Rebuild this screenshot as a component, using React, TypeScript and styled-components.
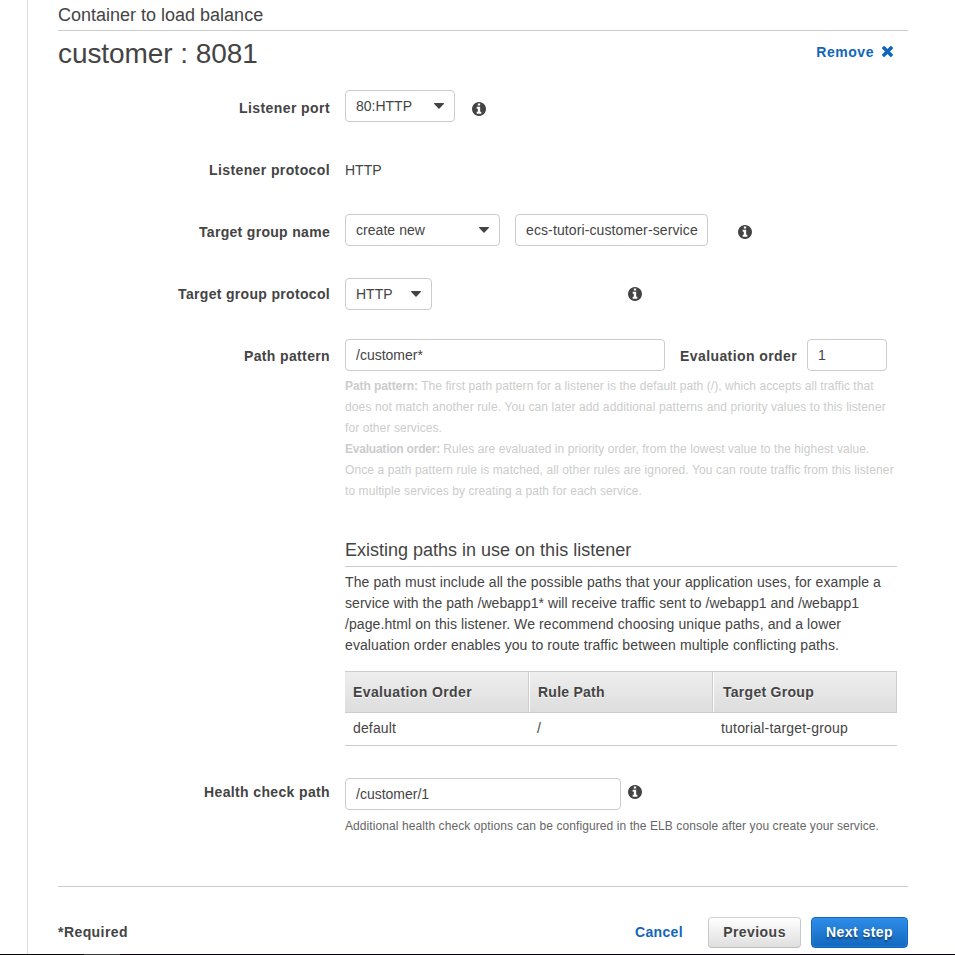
import React from "react";
import styled, { createGlobalStyle, css } from "styled-components";

const GlobalStyle = createGlobalStyle`
  *, *::before, *::after { box-sizing: border-box; }
  html, body { margin: 0; padding: 0; background: #fff; }
  body {
    font-family: "Liberation Sans", Arial, Helvetica, sans-serif;
    font-size: 14px;
    line-height: 21px;
    color: #444;
    overflow: hidden;
  }
`;

const Screen = styled.div`
  display: flex;
  flex-direction: column;
  width: 955px;
  height: 955px;
  overflow: hidden;
`;

const Main = styled.main`
  flex: 1;
  min-height: 0;
  margin-left: 27px;
  padding: 3px 46px 0 30px;
  border-left: 1px solid #ddd;
`;

const Taskbar = styled.div`
  flex: none;
  height: 1px;
  background: linear-gradient(90deg, #080808 84px, #3a3a3a 84px, #3a3a3a 120px, #080010 120px);
`;

const Text = styled.span<{ $ls?: number }>`
  letter-spacing: ${(p) => p.$ls ?? 0}px;
  white-space: nowrap;
`;

const Strong = styled.b<{ $ls: number }>`
  letter-spacing: ${(p) => p.$ls}px;
`;

const SectionTitle = styled.h3<{ $width: number; $gapBottom: number }>`
  width: ${(p) => p.$width}px;
  margin: 0;
  padding-bottom: ${(p) => p.$gapBottom}px;
  border-bottom: 1px solid #ccc;
  font-size: 18px;
  font-weight: 400;
  line-height: 25px;
`;

const ContainerBar = styled.div`
  display: flex;
  justify-content: space-between;
  align-items: flex-start;
  height: 59px;
  padding: 3px 15px 0 0;
  width: 850px;
`;

const ContainerName = styled.h2`
  margin: 0;
  font-size: 28px;
  font-weight: 400;
  line-height: 40px;
`;

const RemoveLink = styled.a`
  display: flex;
  align-items: flex-start;
  gap: 8px;
  margin-top: 8px;
  color: #16b;
  font-weight: 700;
  cursor: pointer;
`;

const FormRow = styled.div<{ $height?: number }>`
  display: grid;
  grid-template-columns: 272px 552px;
  column-gap: 15px;
  align-items: start;
  height: ${(p) => (p.$height ? `${p.$height}px` : "auto")};
`;

const Label = styled.label<{ $ls: number }>`
  padding-top: 8px;
  text-align: right;
  font-weight: 700;
  letter-spacing: ${(p) => p.$ls}px;
  white-space: nowrap;
`;

const Controls = styled.div<{ $top?: number }>`
  display: flex;
  align-items: flex-start;
  padding-top: ${(p) => p.$top ?? 0}px;
`;

const StaticValue = styled.div`
  padding-top: 8px;
`;

const fieldBox = css`
  height: 32px;
  border: 1px solid #ccc;
  border-radius: 4px;
  background: #fff;
  color: #444;
  font: 14px/22px "Liberation Sans", Arial, sans-serif;
`;

const SelectBox = styled.button<{ $width: number }>`
  ${fieldBox}
  display: flex;
  justify-content: space-between;
  align-items: center;
  width: ${(p) => p.$width}px;
  padding: 0 10px;
`;

const TextField = styled.input<{ $width: number; $ls?: number; $ml?: number }>`
  ${fieldBox}
  width: ${(p) => p.$width}px;
  margin-left: ${(p) => p.$ml ?? 0}px;
  padding: 0 0 0 10px;
  letter-spacing: ${(p) => p.$ls ?? 0}px;
  outline: none;
`;

const InlineLabel = styled(Label)`
  width: 127px;
  margin-left: 15px;
  padding-top: 7px;
  text-align: left;
`;

const InfoIcon = styled.svg<{ $left: number; $top: number }>`
  flex: none;
  width: 14px;
  height: 14px;
  margin: ${(p) => p.$top}px 0 0 ${(p) => p.$left}px;
  fill: #444;
`;

const HelpText = styled.div<{ $tone: "muted" | "dark" }>`
  display: flex;
  flex-direction: column;
  margin-top: ${(p) => (p.$tone === "muted" ? 5 : 6)}px;
  color: ${(p) => (p.$tone === "muted" ? "#ccc" : "#666")};
  font-size: 12px;
`;

const Line = styled.div<{ $ls: number }>`
  letter-spacing: ${(p) => p.$ls}px;
  white-space: pre;
`;

const ExistingPaths = styled.section`
  margin-top: 36px;
`;

const Paragraph = styled.div`
  margin: 5px 0 15px;
`;

const PathTable = styled.table`
  width: 552px;
  border-collapse: separate;
  border-spacing: 0;
  table-layout: fixed;
`;

const HeadCell = styled.th<{ $ls: number }>`
  height: 42px;
  padding: 0 8px;
  border: 0 solid #ccc;
  border-width: 1px 1px 1px 0;
  background: linear-gradient(#eee, #ddd);
  text-align: left;
  text-shadow: 0 1px 0 #fff;
  letter-spacing: ${(p) => p.$ls}px;
  & + & {
    padding-left: 9px;
    box-shadow: inset 1px 0 0 #fff;
  }
  &:last-child {
    padding-left: 10px;
  }
`;

const Cell = styled.td<{ $ls?: number }>`
  height: 33px;
  padding: 5px 8px 6px;
  border-bottom: 1px solid #ccc;
  letter-spacing: ${(p) => p.$ls ?? 0}px;
`;

const HealthRow = styled.div`
  margin-top: 28px;
`;

const Footer = styled.footer`
  display: flex;
  align-items: flex-start;
  width: 850px;
  margin-top: 49px;
  padding-top: 30px;
  border-top: 1px solid #ccc;
  font-weight: 700;
`;

const Required = styled.span`
  flex: 1;
  margin-top: 5px;
  letter-spacing: 0.43px;
`;

const CancelLink = styled.a`
  margin: 5px 25px 0 0;
  color: #16b;
  letter-spacing: 0.35px;
  cursor: pointer;
`;

const Button = styled.button<{ $primary?: boolean }>`
  height: 31px;
  width: ${(p) => (p.$primary ? 97 : 93)}px;
  margin-left: ${(p) => (p.$primary ? 10 : 0)}px;
  padding: 0;
  border-radius: 4px;
  font: 700 14px/21px "Liberation Sans", Arial, sans-serif;
  letter-spacing: 0.45px;
  white-space: nowrap;
  ${(p) =>
    p.$primary
      ? css`
          border: 1px solid #1166bb;
          background: linear-gradient(#2e8de8, #1268be);
          box-shadow: inset 0 0 2px #3f9af0;
          color: #fff;
          text-shadow: 0 2px 2px rgba(0, 0, 0, 0.45);
        `
      : css`
          border: 1px solid;
          border-color: #d2d2d2 #c8c8c8 #bdbdbd #c8c8c8;
          background: linear-gradient(#fff, #dfdfdf);
          color: #444;
          text-shadow: 0 1px 0 #fff;
        `}
`;

const CaretSvg = styled.svg`
  flex: none;
  width: 10px;
  height: 6px;
  fill: #444;
`;

const CrossSvg = styled.svg`
  width: 11px;
  height: 11px;
  margin-top: 4px;
  fill: #16b;
`;

const Caret = () => (
  <CaretSvg viewBox="0 0 10 6">
    <path d="M.6 0h8.8q.6 0 .6.6 0 .2-.2.4L5.5 5.5q-.5.5-1 0L.2 1Q0 .8 0 .6 0 0 .6 0z" />
  </CaretSvg>
);

const Info = ({ left, top }: { left: number; top: number }) => (
  <InfoIcon $left={left} $top={top} viewBox="128 128 1536 1536">
    <path d="M1152 1376v-160q0-14-9-23t-23-9h-96v-512q0-14-9-23t-23-9h-320q-14 0-23 9t-9 23v160q0 14 9 23t23 9h96v320h-96q-14 0-23 9t-9 23v160q0 14 9 23t23 9h448q14 0 23-9t9-23zm-128-896v-160q0-14-9-23t-23-9h-192q-14 0-23 9t-9 23v160q0 14 9 23t23 9h192q14 0 23-9t9-23zm640 416q0 209-103 385.5t-279.5 279.5-385.5 103-385.5-103-279.5-279.5-103-385.5 103-385.5 279.5-279.5 385.5-103 385.5 103 279.5 279.5 103 385.5z" />
  </InfoIcon>
);

const Cross = () => (
  <CrossSvg viewBox="110 366 1188 1188">
    <path d="M1298 1322q0 40-28 68l-136 136q-28 28-68 28t-68-28l-294-294-294 294q-28 28-68 28t-68-28l-136-136q-28-28-28-68t28-68l294-294-294-294q-28-28-28-68t28-68l136-136q28-28 68-28t68 28l294 294 294-294q28-28 68-28t68 28l136 136q28 28 28 68t-28 68l-294 294 294 294q28 28 28 68z" />
  </CrossSvg>
);

export default function App() {
  return (
    <>
      <GlobalStyle />
      <Screen>
        <Main>
          <SectionTitle $width={850} $gapBottom={2}>
            Container to load balance
          </SectionTitle>
          <ContainerBar>
            <ContainerName>
              <Text $ls={-0.07}>customer : 8081</Text>
            </ContainerName>
            <RemoveLink>
              <Text $ls={0.55}>Remove</Text>
              <Cross />
            </RemoveLink>
          </ContainerBar>

          <FormRow $height={62}>
            <Label $ls={0.42}>Listener port</Label>
            <Controls>
              <SelectBox $width={110}>
                <Text>80:HTTP</Text>
                <Caret />
              </SelectBox>
              <Info left={17} top={12} />
            </Controls>
          </FormRow>

          <FormRow $height={62}>
            <Label $ls={0.39}>Listener protocol</Label>
            <StaticValue>HTTP</StaticValue>
          </FormRow>

          <FormRow $height={62}>
            <Label $ls={0.31}>Target group name</Label>
            <Controls>
              <SelectBox $width={155}>
                <Text $ls={0.05}>create new</Text>
                <Caret />
              </SelectBox>
              <TextField $width={193} $ls={0.11} $ml={15} defaultValue="ecs-tutori-customer-service" />
              <Info left={30} top={11} />
            </Controls>
          </FormRow>

          <FormRow $height={62}>
            <Label $ls={0.32}>Target group protocol</Label>
            <Controls $top={2}>
              <SelectBox $width={87}>
                <Text>HTTP</Text>
                <Caret />
              </SelectBox>
              <Info left={196} top={9} />
            </Controls>
          </FormRow>

          <FormRow>
            <Label $ls={0.36}>Path pattern</Label>
            <div>
              <Controls $top={1}>
                <TextField $width={320} defaultValue="/customer*" />
                <InlineLabel $ls={0.41}>Evaluation order</InlineLabel>
                <TextField $width={80} defaultValue="1" />
              </Controls>
              <HelpText $tone="muted">
                <Line $ls={0.07}>
                  <Strong $ls={-0.08}>Path pattern:</Strong> The first path pattern for a listener is the default path (/), which accepts all traffic that
                </Line>
                <Line $ls={0.121}>does not match another rule. You can later add additional patterns and priority values to this listener</Line>
                <Line $ls={0.086}>for other services.</Line>
                <Line $ls={0.07}>
                  <Strong $ls={-0.22}>Evaluation order:</Strong> Rules are evaluated in priority order, from the lowest value to the highest value.
                </Line>
                <Line $ls={0.107}>Once a path pattern rule is matched, all other rules are ignored. You can route traffic from this listener</Line>
                <Line $ls={0.085}>to multiple services by creating a path for each service.</Line>
              </HelpText>

              <ExistingPaths>
                <SectionTitle $width={552} $gapBottom={3}>
                  Existing paths in use on this listener
                </SectionTitle>
                <Paragraph>
                  <Line $ls={0.097}>The path must include all the possible paths that your application uses, for example a</Line>
                  <Line $ls={0.046}>service with the path /webapp1* will receive traffic sent to /webapp1 and /webapp1</Line>
                  <Line $ls={0.089}>/page.html on this listener. We recommend choosing unique paths, and a lower</Line>
                  <Line $ls={0.097}>evaluation order enables you to route traffic between multiple conflicting paths.</Line>
                </Paragraph>
                <PathTable>
                  <thead>
                    <tr>
                      <HeadCell $ls={0.39}>Evaluation Order</HeadCell>
                      <HeadCell $ls={0.25}>Rule Path</HeadCell>
                      <HeadCell $ls={0.28}>Target Group</HeadCell>
                    </tr>
                  </thead>
                  <tbody>
                    <tr>
                      <Cell $ls={0.14}>default</Cell>
                      <Cell>/</Cell>
                      <Cell $ls={0.19}>tutorial-target-group</Cell>
                    </tr>
                  </tbody>
                </PathTable>
              </ExistingPaths>
            </div>
          </FormRow>

          <HealthRow>
            <FormRow>
              <Label $ls={0.36}>Health check path</Label>
              <div>
                <Controls $top={4}>
                  <TextField $width={276} defaultValue="/customer/1" />
                  <Info left={7} top={7} />
                </Controls>
                <HelpText $tone="dark">
                  <Line $ls={0.084}>Additional health check options can be configured in the ELB console after you create your service.</Line>
                </HelpText>
              </div>
            </FormRow>
          </HealthRow>

          <Footer>
            <Required>*Required</Required>
            <CancelLink>Cancel</CancelLink>
            <Button>Previous</Button>
            <Button $primary>Next step</Button>
          </Footer>
        </Main>
        <Taskbar />
      </Screen>
    </>
  );
}
